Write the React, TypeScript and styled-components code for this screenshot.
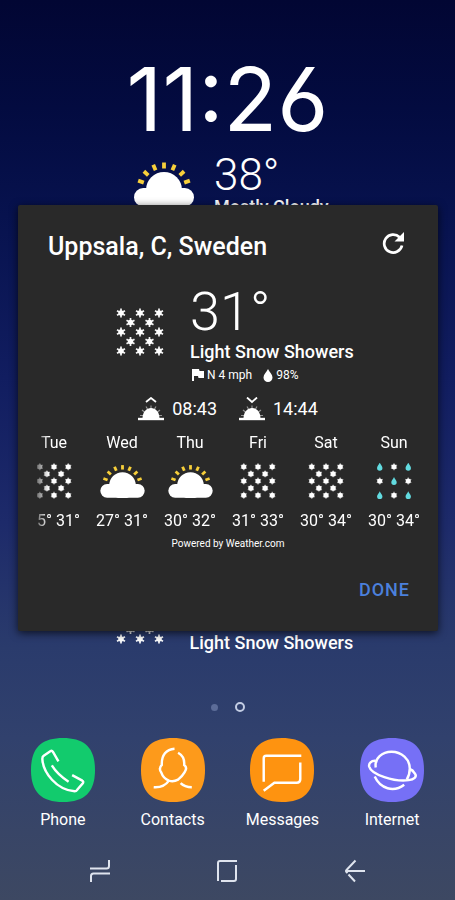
import React from "react";
import styled, { createGlobalStyle } from "styled-components";

const GlobalStyle = createGlobalStyle`
  * { box-sizing: border-box; }
  body {
    margin: 0;
    color: #fff;
    font-family: Roboto, "Noto Sans", sans-serif;
  }
  button {
    margin: 0;
    padding: 0;
    border: 0;
    background: none;
    color: inherit;
    font: inherit;
    cursor: pointer;
  }
  svg { display: block; flex: none; }
`;

const Home = styled.main`
  position: relative;
  display: flex;
  flex-direction: column;
  min-height: 100vh;
  padding-top: 59px;
  overflow: hidden;
  background: linear-gradient(#020633 0%, #030b40 12%, #07124e 24%, #111d60 42%, #1d2a6a 58%, #2a3b6c 72%, #31416d 82%, #3d4862 100%);
`;

const Clock = styled.time`
  font-family: Inter, sans-serif;
  font-size: 88px;
  font-weight: 400;
  font-feature-settings: "ss01";
  line-height: 80px;
  text-align: center;
`;

const Widget = styled.section<{ $width: number; $inset: number; $gap: number }>`
  display: flex;
  align-items: flex-start;
  gap: ${(p) => p.$gap}px;
  width: ${(p) => p.$width}px;
  margin: 0 auto;
  padding-left: ${(p) => p.$inset}px;
  white-space: nowrap;
`;

const WidgetIcon = styled.div<{ $top: number }>`
  padding-top: ${(p) => p.$top}px;
`;

const Temperature = styled.div<{ $size: number; $line: number }>`
  font-size: ${(p) => p.$size}px;
  font-weight: 300;
  line-height: ${(p) => p.$line}px;
`;

const Condition = styled.div<{ $line: number }>`
  font-size: 18px;
  font-weight: 500;
  line-height: ${(p) => p.$line}px;
`;

const TopSlot = styled.div`
  flex: 1;
  padding-top: 15px;
`;

const Dots = styled.div`
  display: flex;
  align-items: center;
  justify-content: center;
  gap: 17px;
  height: 20px;
  margin: 42px 0 21px;
`;

const Dot = styled.span<{ $current?: boolean }>`
  width: ${(p) => (p.$current ? 10 : 7)}px;
  height: ${(p) => (p.$current ? 10 : 7)}px;
  border: ${(p) => (p.$current ? "2px solid #c3cde4" : "0")};
  border-radius: 50%;
  background: ${(p) => (p.$current ? "transparent" : "#5c6c98")};
`;

const Dock = styled.nav`
  display: grid;
  grid-template-columns: repeat(4, 1fr);
  padding: 0 8px;
`;

const AppButton = styled.button`
  display: flex;
  flex-direction: column;
  align-items: center;
  gap: 7px;
  font-size: 16px;
  line-height: 22px;
`;

const AppTile = styled.span`
  width: 64px;
  height: 64px;
`;

const SystemBar = styled.nav`
  display: grid;
  grid-template-columns: repeat(3, 1fr);
  align-items: center;
  height: 58px;
  margin-top: 11px;
  padding: 0 36px;
`;

const SystemButton = styled.button`
  display: flex;
  align-items: center;
  justify-content: center;
  height: 40px;
`;

const Dialog = styled.div`
  position: absolute;
  top: 205px;
  left: 18px;
  right: 17px;
  display: flex;
  flex-direction: column;
  padding: 24px 0 23px;
  border-radius: 2px;
  background: #292929;
  box-shadow: 0 2px 8px rgba(0, 0, 0, 0.7);
`;

const DialogHeader = styled.header`
  display: flex;
  align-items: flex-start;
  justify-content: space-between;
  height: 34px;
  margin-bottom: 21px;
  padding: 0 34px 0 30px;
`;

const Title = styled.h1`
  margin: 0;
  font-size: 25px;
  font-weight: 500;
  line-height: 35px;
`;

const RefreshButton = styled.button`
  display: flex;
  align-items: center;
  height: 28px;
`;

const Meta = styled.div`
  display: flex;
  align-items: center;
  gap: 11px;
  height: 22px;
  padding-left: 2px;
  font-size: 12px;
`;

const MetaItem = styled.span`
  display: flex;
  align-items: center;
  gap: 3px;
`;

const SunTimes = styled.div`
  display: flex;
  justify-content: center;
  gap: 22px;
  margin: 11px 0;
`;

const SunTime = styled.div`
  display: flex;
  align-items: center;
  gap: 8px;
  font-size: 18px;
  line-height: 24px;
`;

const Forecast = styled.ul`
  display: flex;
  justify-content: flex-end;
  margin: 0 10px 0 19px;
  padding: 0;
  overflow: hidden;
  list-style: none;
  mask-image: linear-gradient(90deg, rgba(0, 0, 0, 0.35), #000 12px);
`;

const Day = styled.li`
  display: flex;
  flex: 0 0 68px;
  flex-direction: column;
  align-items: center;
  gap: 9px;
  font-size: 16px;
  line-height: 22px;
  white-space: nowrap;
`;

const Credit = styled.p`
  margin: 4px 0 20px;
  font-size: 10px;
  line-height: 16px;
  text-align: center;
`;

const DoneButton = styled.button`
  align-self: flex-end;
  height: 36px;
  margin-right: 28px;
  color: #4b80dc;
  font-size: 18px;
  font-weight: 500;
  line-height: 34px;
  letter-spacing: 1px;
`;

type Sky = "snow" | "cloud" | "mix";

const CloudIcon = ({ size }: { size: number }) => (
  <svg width={size} height={Math.round(size * 0.76)} viewBox="0 0 60 46" aria-hidden="true">
    {[-70, -47, -23, 0, 23, 47, 70].map((angle) => (
      <path key={angle} d="M30 1.5V7.500" stroke="#f7cf3a" strokeWidth="3.8" transform={`rotate(${angle} 30 29)`} />
    ))}
    <circle cx="30" cy="29" r="18" fill="#fff" />
    <rect y="27" width="60" height="18.500" rx="9.200" fill="#fff" />
  </svg>
);

const Flake = ({ x, y, small }: { x: number; y: number; small: boolean }) => (
  <g transform={`translate(${x} ${y})`}>
    <path d="M0-4.600V4.600M-4-2.300 4 2.300M4-2.300-4 2.300" stroke="#fff" strokeOpacity={small ? 0.6 : 0.95} strokeWidth="1.700" />
    <circle r={small ? 3.4 : 2.7} fill="#fff" />
  </g>
);

const Drop = ({ x, y }: { x: number; y: number }) => (
  <path transform={`translate(${x} ${y})`} d="M0-5.500C1-3 3.600-.600 3.600 1.600a3.600 3.600 0 0 1-7.200 0C-3.600-.600-1-3 0-5.500Z" fill="#62dbe0" />
);

const SnowIcon = ({ size, mix = false }: { size: number; mix?: boolean }) => {
  const outer = [5, 24, 43];
  const inner = [14.5, 33.5];
  const small = size < 40;
  return (
    <svg width={size} height={size} viewBox="0 0 48 48" aria-hidden="true">
      {outer.flatMap((y, row) =>
        outer.map((x, column) =>
          mix && (row + column) % 2 === 0 ? (
            <Drop key={`${x}-${y}`} x={x} y={y} />
          ) : (
            <Flake key={`${x}-${y}`} x={x} y={y} small={small} />
          ),
        ),
      )}
      {!mix && inner.flatMap((y) => inner.map((x) => <Flake key={`${x}-${y}`} x={x} y={y} small={small} />))}
    </svg>
  );
};

const DayIcon = styled.span`
  display: flex;
  align-items: center;
  justify-content: center;
  height: 36px;
  margin-bottom: 2px;
`;

const SkyIcon = ({ sky }: { sky: Sky }) => (
  <DayIcon>{sky === "cloud" ? <CloudIcon size={45} /> : <SnowIcon size={36} mix={sky === "mix"} />}</DayIcon>
);

const SunIcon = ({ rising }: { rising: boolean }) => (
  <svg width="26" height="24" viewBox="0 0 26 24" aria-hidden="true">
    <path d={rising ? "m8 5 5-4 5 4" : "m8 .500 5 4.500 5-4.500"} fill="none" stroke="#fff" strokeWidth="1.800" />
    <path d="M4.500 21.500C4.500 7.500 21.500 7.500 21.500 21.500Z" fill="#fff" />
    <path d="M0 22h26" stroke="#fff" strokeWidth="2.400" />
    <path d="M13 8.500V12M8 9.500 9.500 12M18 9.500 16.500 12M4 13 6.500 15M22 13 19.500 15M2 18.500h3M24 18.500h-3" stroke="#fff" strokeOpacity=".5" strokeWidth="1.200" />
  </svg>
);

const days: { name: string; sky: Sky; low: number; high: number }[] = [
  { name: "Tue", sky: "snow", low: 25, high: 31 },
  { name: "Wed", sky: "cloud", low: 27, high: 31 },
  { name: "Thu", sky: "cloud", low: 30, high: 32 },
  { name: "Fri", sky: "snow", low: 31, high: 33 },
  { name: "Sat", sky: "snow", low: 30, high: 34 },
  { name: "Sun", sky: "mix", low: 30, high: 34 },
];

const apps = [
  {
    name: "Phone",
    color: "#12cb6d",
    paths: ["M27 23 21.500 13.500Q20.500 12 19 13L12.500 17.500Q11 18.500 11.200 21C12 34 25 51 43 52.500Q44.500 52.500 45.500 51L51 44.500Q52 43 50.500 42L40.500 36.500", "M20.500 27Q26 36 37 43"],
  },
  {
    name: "Contacts",
    color: "#fd9a1b",
    paths: ["M33 10.500C25 11 20 17 20.500 26.500Q17 30 20 34C21 37 24 40.500 27.500 42Q32 43.500 36.500 41Q41 37 43 33.500Q46 29 42.500 26.500C43 21 41 17 36.500 14.500", "M27.500 42C24 47 19 49 12.500 48.500", "M39 44.500Q43 48.500 50 48.500"],
  },
  {
    name: "Messages",
    color: "#fe9310",
    paths: ["M13.500 43V20Q13.500 17.500 16 17.500H50.500", "M49.500 24V40.500Q49.500 44 46 44H24L13.500 52"],
  },
  {
    name: "Internet",
    color: "#7670f6",
    paths: ["M15.500 29C14 20 22 13.500 31 13.500C41 13.500 49 21 49 30Q49 36 46 41", "M15.500 22.500C11 22 8.500 25 9 28C11 36 34 43.500 48 41.500C53 41 56.500 38 54 35Q52 31.500 49 30.500", "M14.500 38C20 50 33 54 43.500 46"],
  },
];

export default function App() {
  return (
    <>
      <GlobalStyle />
      <Home>
        <Clock>11:26</Clock>
        <TopSlot>
          <Widget $width={201} $inset={7} $gap={20}>
            <WidgetIcon $top={7}>
              <CloudIcon size={60} />
            </WidgetIcon>
            <div>
              <Temperature $size={44} $line={43}>38°</Temperature>
              <Condition $line={20}>Mostly Cloudy</Condition>
            </div>
          </Widget>
        </TopSlot>
        <Widget $width={248} $inset={12} $gap={26}>
          <WidgetIcon $top={21}>
            <SnowIcon size={48} />
          </WidgetIcon>
          <div>
            <Temperature $size={54} $line={56}>31°</Temperature>
            <Condition $line={24}>Light Snow Showers</Condition>
          </div>
        </Widget>
        <Dots>
          <Dot />
          <Dot $current />
        </Dots>
        <Dock aria-label="Apps">
          {apps.map((app) => (
            <AppButton key={app.name} type="button">
              <AppTile>
                <svg width="64" height="64" viewBox="0 0 63 63" fill="none" stroke="#fff" strokeWidth="2.400" aria-hidden="true">
                  <path
                    d="M31.500 0C53 0 63 10 63 31.500S53 63 31.500 63 0 53 0 31.500 10 0 31.500 0Z"
                    fill={app.color}
                    stroke="none"
                  />
                  {app.paths.map((d) => (
                    <path key={d} d={d} />
                  ))}
                </svg>
              </AppTile>
              {app.name}
            </AppButton>
          ))}
        </Dock>
        <SystemBar aria-label="System">
          <SystemButton type="button" aria-label="Recent apps">
            <svg width="22" height="24" viewBox="0 0 22 24" fill="none" stroke="#dfe4ee" strokeWidth="2" aria-hidden="true">
              <path d="M20 1V7Q20 9.500 17.500 9.500H1M2 23V17Q2 14.500 4.500 14.500H21" />
            </svg>
          </SystemButton>
          <SystemButton type="button" aria-label="Home">
            <svg width="22" height="24" viewBox="0 0 22 24" fill="none" stroke="#dfe4ee" strokeWidth="2" aria-hidden="true">
              <path d="M2 22V4Q2 2 4 2H21M20 6V20Q20 22 18 22H5" />
            </svg>
          </SystemButton>
          <SystemButton type="button" aria-label="Back">
            <svg width="22" height="24" viewBox="0 0 22 24" fill="none" stroke="#dfe4ee" strokeWidth="2" aria-hidden="true">
              <path d="M11.500 1.500 2.500 11Q1.500 12 2.500 13L3.500 14M4.500 15.500 11 22.500M2 12H21" />
            </svg>
          </SystemButton>
        </SystemBar>

        <Dialog role="dialog" aria-labelledby="place">
          <DialogHeader>
            <Title id="place">Uppsala, C, Sweden</Title>
            <RefreshButton type="button" aria-label="Refresh">
              <svg width="22" height="22" viewBox="0 0 22 22" aria-hidden="true">
                <path d="M17.600 5.200A9 9 0 1 0 20 13.500" fill="none" stroke="#fff" strokeWidth="2.700" />
                <path d="M22 0V9.500H12.500Z" fill="#fff" />
              </svg>
            </RefreshButton>
          </DialogHeader>
          <Widget $width={248} $inset={12} $gap={26}>
            <WidgetIcon $top={24}>
              <SnowIcon size={48} />
            </WidgetIcon>
            <div>
              <Temperature $size={54} $line={56}>31°</Temperature>
              <Condition $line={24}>Light Snow Showers</Condition>
              <Meta>
                <MetaItem>
                  <svg width="12" height="12" viewBox="0 0 12 12" fill="#fff" aria-hidden="true">
                    <path d="M0 0H7L7.500 2H12V9H6.500L6 7H2V12H0Z" />
                  </svg>
                  N 4 mph
                </MetaItem>
                <MetaItem>
                  <svg width="10" height="13" viewBox="0 0 10 13" fill="#fff" aria-hidden="true">
                    <path d="M5 0C6.500 3 9.500 5.500 9.500 8.500a4.500 4.500 0 0 1-9 0C.5 5.500 3.500 3 5 0Z" />
                  </svg>
                  98%
                </MetaItem>
              </Meta>
            </div>
          </Widget>
          <SunTimes>
            <SunTime>
              <SunIcon rising />
              08:43
            </SunTime>
            <SunTime>
              <SunIcon rising={false} />
              14:44
            </SunTime>
          </SunTimes>
          <Forecast>
            {days.map((day) => (
              <Day key={day.name}>
                <span>{day.name}</span>
                <SkyIcon sky={day.sky} />
                <span>
                  {day.low}° {day.high}°
                </span>
              </Day>
            ))}
          </Forecast>
          <Credit>Powered by Weather.com</Credit>
          <DoneButton type="button">DONE</DoneButton>
        </Dialog>
      </Home>
    </>
  );
}
